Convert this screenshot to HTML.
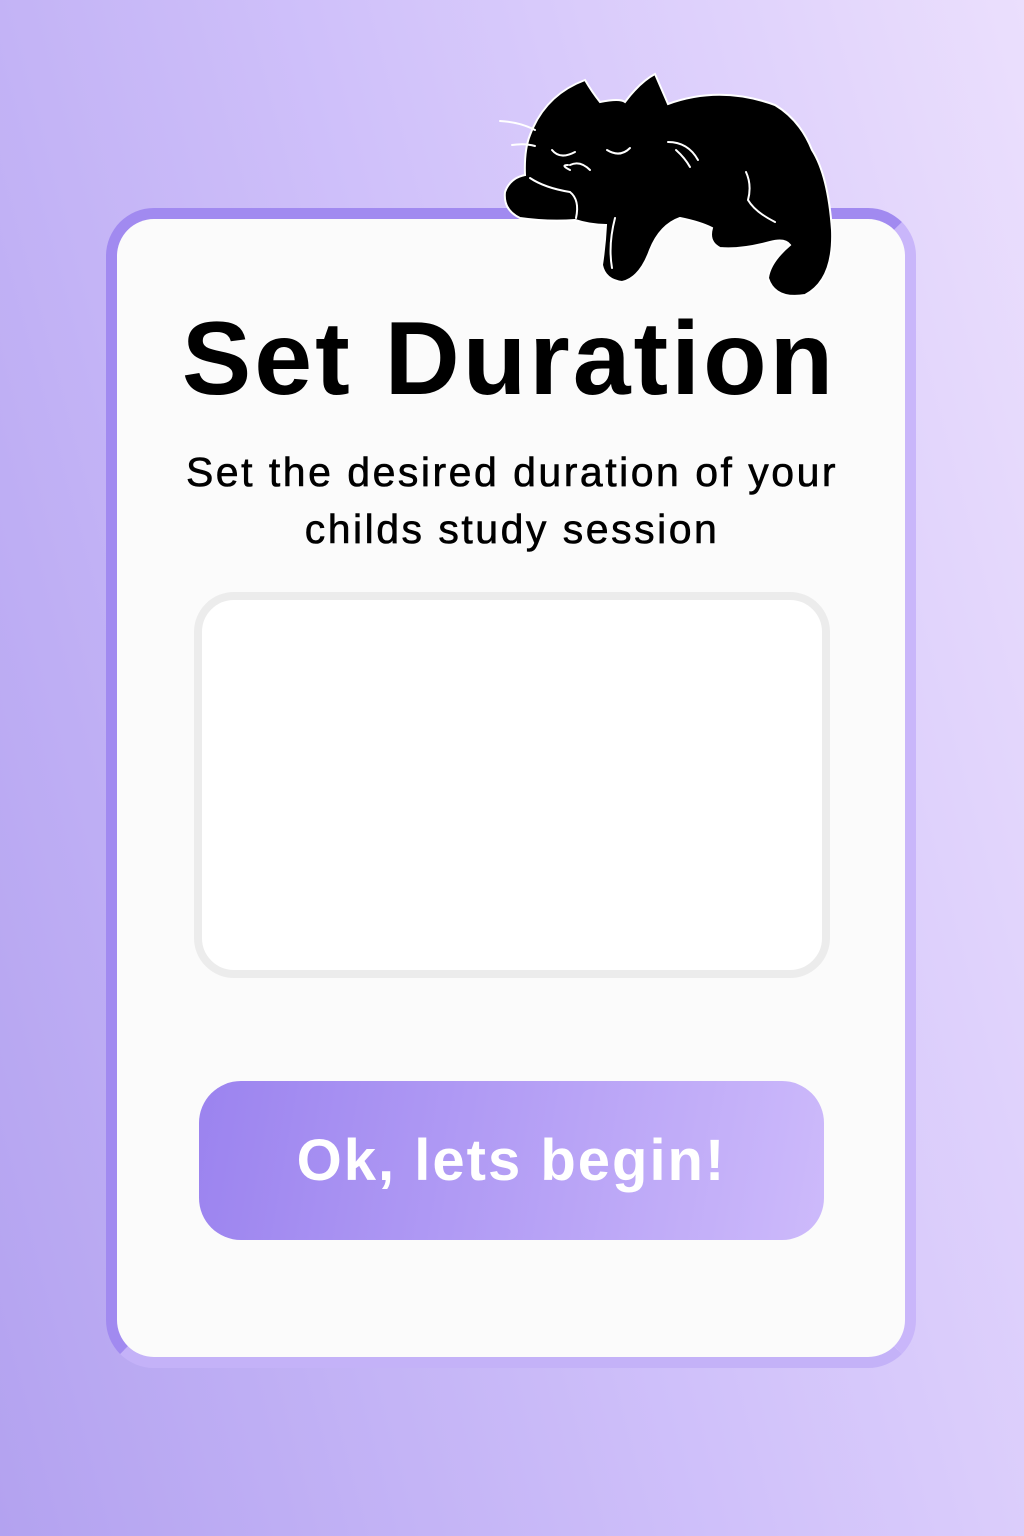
<!DOCTYPE html>
<html><head><meta charset="utf-8"><style>
html,body{margin:0;padding:0}
body{width:1024px;height:1536px;overflow:hidden;position:relative;background:linear-gradient(75deg,#b3a2f0 0%,#cfc0fa 50%,#ebdffd 100%);font-family:"Liberation Sans",sans-serif}
.card{position:absolute;left:106px;top:208px;width:788px;height:1138px;border:11px solid #a690f2;border-radius:48px;background:#fbfbfb;border-color:#a18af0 #c9b6fa #c4b2f8 #a18af0}
.t{position:absolute;left:0;width:1024px;text-align:center;color:#000}
.title{top:300px;font-size:104px;font-weight:bold;letter-spacing:3px;left:-3px}
.sub{top:444px;font-size:41px;line-height:57px;letter-spacing:2.5px;-webkit-text-stroke:0.6px #000}
.box{position:absolute;left:194px;top:592px;width:620px;height:370px;border:8px solid #ececec;border-radius:40px;background:#fff}
.btn{position:absolute;left:199px;top:1081px;width:625px;height:159px;border-radius:42px;background:linear-gradient(100deg,#9b83ef,#cdbafb);color:#fff;font-size:58px;font-weight:bold;text-align:center;line-height:159px;letter-spacing:2px}
</style></head><body>
<div class="card"></div>
<div class="t title">Set Duration</div>
<div class="t sub">Set the desired duration of your<br>childs study session</div>
<div class="box"></div>
<div class="btn">Ok, lets begin!</div>
<svg style="position:absolute;left:0;top:0" width="1024" height="320" viewBox="0 0 1024 320">
<g fill="#000" stroke="#fff" stroke-width="2">
<path d="M530 135 Q545 95 585 80 Q592 92 600 102 Q620 98 625 102 Q640 82 655 74 Q662 90 668 104 Q720 85 775 105 Q800 120 812 150 Q828 175 832 230 Q834 280 805 295 Q775 300 768 278 Q770 262 790 245 Q785 238 770 242 Q740 250 720 248 Q708 242 712 228 Q700 222 680 218 Q660 225 650 250 Q640 278 622 282 Q605 280 602 265 Q605 245 606 225 Q590 225 575 220 Q548 222 520 218 Q503 210 505 192 Q510 178 525 175 Q524 150 530 135Z"/>
</g>
<g fill="none" stroke="#fff" stroke-width="2" stroke-linecap="round">
<path d="M500 121 Q520 122 535 130"/><path d="M512 145 Q525 143 535 146"/>
<path d="M552 150 Q560 160 575 152"/><path d="M607 150 Q620 158 630 148"/>
<path d="M570 165 Q580 160 590 170"/><path d="M568 165 Q560 165 570 170"/>
<path d="M668 142 Q688 142 698 160"/><path d="M676 150 Q685 158 690 167"/>
<path d="M746 172 Q752 185 748 200 Q755 212 775 222"/>
<path d="M530 178 Q545 188 570 192 Q580 200 576 218"/>
<path d="M615 218 Q608 245 612 268"/>
</g>
</svg>
</body></html>
